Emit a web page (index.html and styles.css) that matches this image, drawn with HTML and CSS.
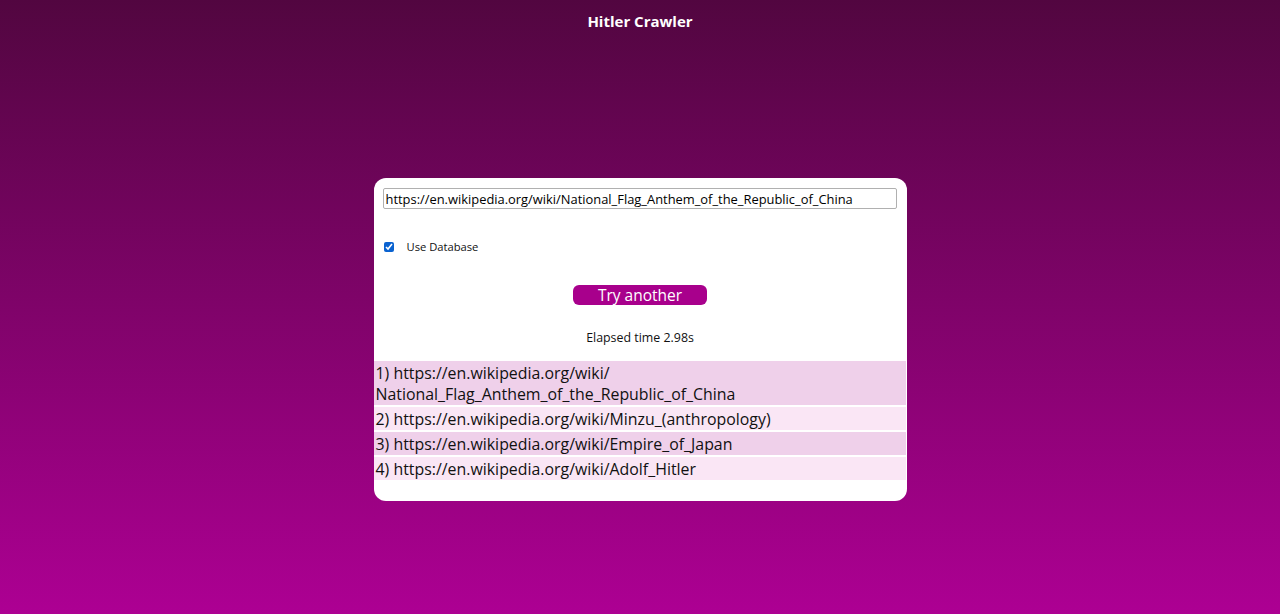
FILE: index.html
```html
<!DOCTYPE html>
<html lang="en">
<head>
<meta charset="utf-8">
<title>Hitler Crawler</title>
<link rel="stylesheet" href="styles.css">
</head>
<body>
<header class="top">
  <h1 class="title">Hitler Crawler</h1>
</header>
<main class="card">
  <input class="url" type="text" value="https://en.wikipedia.org/wiki/National_Flag_Anthem_of_the_Republic_of_China">
  <label class="db">
    <input class="db-check" type="checkbox" checked>
    <span class="db-text">Use Database</span>
  </label>
  <div class="actions">
    <button class="btn" type="button">Try another</button>
  </div>
  <p class="elapsed">Elapsed time 2.98s</p>
  <ol class="path">
    <li class="step odd">1) https://en.wikipedia.org/wiki/<wbr>National_Flag_Anthem_of_the_Republic_of_China</li>
    <li class="step even">2) https://en.wikipedia.org/wiki/Minzu_(anthropology)</li>
    <li class="step odd">3) https://en.wikipedia.org/wiki/Empire_of_Japan</li>
    <li class="step even">4) https://en.wikipedia.org/wiki/Adolf_Hitler</li>
  </ol>
</main>
</body>
</html>
```

FILE: styles.css
```css
* { box-sizing: border-box; }

html, body {
  margin: 0;
  padding: 0;
}

body {
  min-height: 100vh;
  background: linear-gradient(to bottom, #520640 0%, #ad0093 100%);
  font-family: "Open Sans", "Noto Sans", sans-serif;
  color: #111;
  display: flex;
  flex-direction: column;
  align-items: center;
}

.top {
  width: 100%;
  text-align: center;
  padding-top: 10px;
}

.title {
  margin: 0;
  font-size: 15px;
  font-weight: 700;
  color: #fff;
  line-height: 22px;
}

.card {
  margin-top: 146px;
  width: 533px;
  background: #fff;
  border-radius: 12px;
  padding: 10px 0 21px 0;
  display: flex;
  flex-direction: column;
}

.url {
  margin: 0 10px 0 9px;
  height: 21px;
  border: 1px solid #b0b0b0;
  border-radius: 2px;
  padding: 0 2px;
  font-family: "Open Sans", "Noto Sans", sans-serif;
  font-size: 12.9px;
  color: #000;
  outline: none;
}

.db {
  margin: 31px 0 0 9px;
  display: flex;
  align-items: center;
  height: 13px;
}

.db-check {
  margin: 0 13px 0 1px;
  width: 10px;
  height: 10px;
  accent-color: #0a62d0;
}

.db-text {
  font-size: 11.2px;
  color: #111;
}

.actions {
  margin-top: 32px;
  display: flex;
  justify-content: center;
}

.btn {
  width: 134px;
  height: 20px;
  border: none;
  border-radius: 6px;
  background: #a8008c;
  color: #fff;
  font-family: "Open Sans", "Noto Sans", sans-serif;
  font-size: 15.5px;
  line-height: 20px;
  padding: 0;
  cursor: pointer;
}

.elapsed {
  margin: 24px 0 0 0;
  text-align: center;
  font-size: 12.4px;
  line-height: 18px;
  color: #111;
}

.path {
  list-style: none;
  margin: 14px 1px 0 0;
  padding: 0;
  display: flex;
  flex-direction: column;
  gap: 2px;
}

.step {
  padding: 2px 2px 0 2px;
  font-size: 15.9px;
  line-height: 21px;
  color: #111;
}

.odd { background: #efd0ea; }
.even { background: #fae6f5; }
```
